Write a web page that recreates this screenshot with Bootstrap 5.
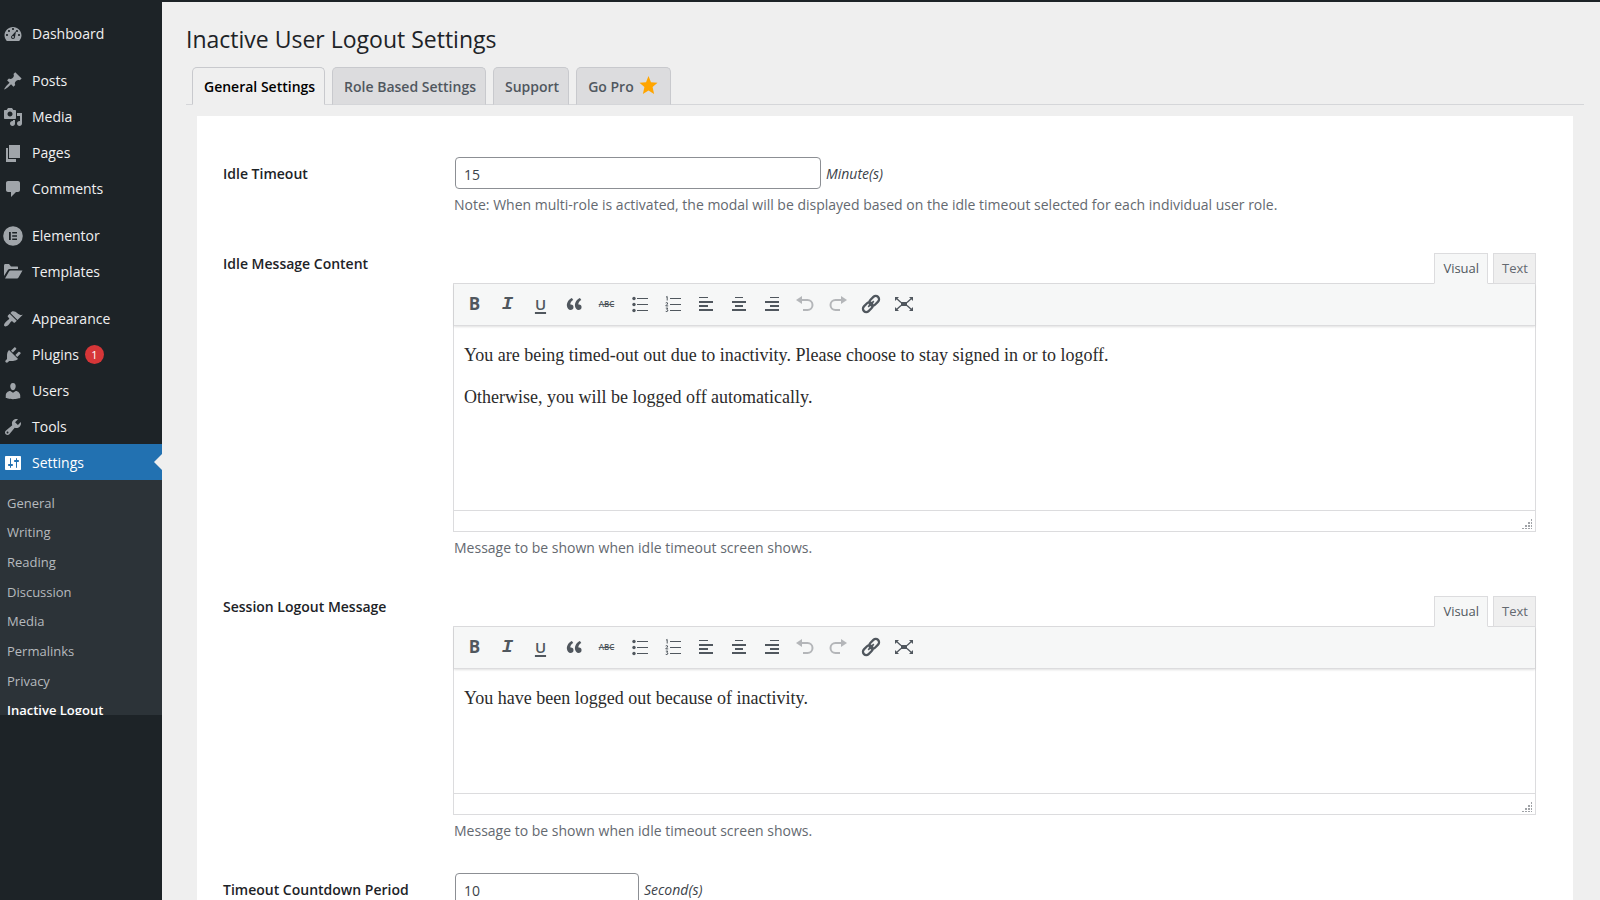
<!DOCTYPE html>
<html lang="en">
<head>
<meta charset="utf-8">
<meta name="viewport" content="width=device-width, initial-scale=1">
<title>Inactive User Logout Settings</title>
<link href="https://cdn.jsdelivr.net/npm/bootstrap@5.3.0/dist/css/bootstrap.min.css" rel="stylesheet">
<style>
  body { font-family: "Open Sans", "Noto Sans", sans-serif; font-size: 14px; line-height: 20px; color: #1d2327; background: #efefef; }
  a { text-decoration: none; }

  /* Admin menu */
  .admin-menu { width: 162px; background: #1d2327; padding-top: 13px; }
  .menu-link { display: flex; align-items: center; gap: 8px; height: 36px; padding: 1px 0 0 4px; color: #f0f0f1; position: relative; }
  .menu-link:hover { color: #72aee6; }
  .menu-link svg { width: 20px; height: 20px; flex: none; fill: #a0a5aa; margin-left: -1px; margin-right: 1px; }
  .menu-gap { margin-top: 11px; }
  .menu-link.current { background: #2271b1; color: #fff; }
  .menu-link.current svg { fill: #fff; }
  .menu-link.current::after { content: ""; position: absolute; right: 0; top: 10px; border: 8px solid transparent; border-left-width: 0; border-right-color: #efefef; }
  .count-pill { width: 19px; height: 19px; font-size: 11px; line-height: 19px; background: #d63638; color: #fff; margin-left: -2px; }
  .submenu-clip { height: 235px; overflow: hidden; background: #2c3338; }
  .submenu-list { display: grid; grid-auto-rows: 1fr; height: 245px; padding: 8px 0 0 7px; margin: 0; font-size: 13px; }
  .submenu-list a { display: flex; align-items: center; height: 100%; color: #b6babe; }
  .submenu-list a.current { color: #fff; font-weight: 600; }

  /* Page head and tabs */
  .page-title { font-size: 23px; line-height: 30px; font-weight: 400; margin: 0; padding-top: 22px; }
  .settings-tabs { gap: 7px; margin-top: 13px; padding-left: 6px; border-bottom: 1px solid #d5d6d9; }
  .settings-tabs .nav-link { display: flex; align-items: center; gap: 5px; height: 38px; padding: 2px 9px 0 11px; border: 1px solid #c8c9cd; border-radius: 5px 5px 0 0; border-bottom: 1px solid #d5d6d9; margin-bottom: -1px; background: #dcdcde; color: #50575e; font-weight: 600; }
  .settings-tabs .nav-link.active { background: #efefef; color: #000; border-color: #c8c9cd #c8c9cd #efefef; }
  .settings-tabs .nav-link.with-icon { padding-right: 12px; }

  /* Settings form */
  .settings-panel { background: #fff; margin: 11px 11px 0; padding: 41px 37px 32px 26px; }
  .form-grid { display: grid; grid-template-columns: 230px minmax(0, 1fr); row-gap: 32px; }
  .field-label { padding-top: 7px; font-weight: 600; align-self: start; }
  .admin-input { height: 32px; width: 366px; margin-left: 2px; padding: 2px 8px 0; border: 1px solid #8c8f94; border-radius: 4px; color: #3c434a; background: #fff; }
  .admin-input.narrow { width: 184px; }
  .unit { color: #3c434a; padding: 2px 0 0 1px; }
  .help-text { color: #646970; margin: 6px 0 0 1px; }

  /* Rich text editor */
  .editor-tabs { gap: 5px; padding-top: 6px; }
  .editor-tabs button { height: 31px; padding: 0 8px 2px; font-size: 13px; line-height: 18px; border: 1px solid #dcdcde; background: #efefef; color: #646970; margin-bottom: -1px; position: relative; z-index: 1; }
  .editor-tabs button:last-child { padding-right: 7px; }
  .editor-tabs button.active { background: #f6f7f7; border-bottom-color: #f6f7f7; color: #50575e; }
  .editor-box { border: 1px solid #dcdcde; }
  .editor-bar { height: 42px; padding: 0 0 2px 4px; background: #f6f7f7; border-bottom: 1px solid #dcdcde; box-shadow: 0 1px 2px rgba(0,0,0,.12); position: relative; }
  .editor-bar button { width: 33px; height: 28px; padding: 0; border: 0; background: none; color: #50575e; line-height: 20px; }
  .editor-bar svg { width: 20px; height: 20px; display: block; margin: auto; }
  .editor-bar button:disabled { color: #b4b6b9; }
  .editor-bar .glyph-b { font-size: 17px; font-weight: 700; }
  .editor-bar .glyph-i { font: italic 700 19px/20px "Liberation Mono", monospace; }
  .editor-bar .glyph-u { font-size: 15px; font-weight: 600; text-decoration: underline 2px; text-underline-offset: 2px; }
  .editor-bar .glyph-s { font-size: 8px; font-weight: 600; text-decoration: line-through; }
  .editor-text { display: block; width: 100%; height: 184px; padding: 19px 10px 0; border: 0; outline: 0; resize: none; color: #2b2b2b; font: 18px/21px "Liberation Serif", Georgia, serif; }
  .editor-text.short { height: 124px; }
  .editor-status { height: 21px; border-top: 1px solid #dcdcde; padding: 0 2px 1px 0; }
</style>
</head>
<body>
<svg class="d-none" aria-hidden="true">
  <symbol id="quote" viewBox="0 0 20 20"><path fill="currentColor" d="M9.490 13.220c0-.74-.2-1.380-.61-1.900-.62-.78-1.830-.88-2.530-.72-.29-1.650 1.110-3.750 2.920-4.650L7.880 4c-2.730 1.300-5.420 4.280-4.960 8.050C3.210 14.430 4.590 16 6.540 16c.85 0 1.560-.25 2.120-.75s.83-1.180.83-2.030zm8.050 0c0-.74-.2-1.380-.61-1.900-.63-.78-1.830-.88-2.530-.72-.29-1.650 1.110-3.750 2.920-4.650L15.930 4c-2.730 1.300-5.410 4.280-4.950 8.050.29 2.380 1.660 3.950 3.610 3.950.85 0 1.560-.25 2.120-.75s.83-1.180.83-2.030z"/></symbol>
  <symbol id="bullets" viewBox="0 0 20 20"><g fill="currentColor"><circle cx="4" cy="4.500" r="1.700"/><circle cx="4" cy="10.500" r="1.700"/><circle cx="4" cy="16.500" r="1.700"/><path d="M7 4h11v1H7zM7 10h11v1H7zM7 16h11v1H7z"/></g></symbol>
  <symbol id="numbers" viewBox="0 0 20 20"><path fill="currentColor" d="M7 4h11v1H7zM7 10h11v1H7zM7 16h11v1H7z"/><path fill="none" stroke="currentColor" stroke-width="1" d="M3 3.200l1.200-.7v4M2.700 9q1.400-.9 2 0q.2.900-2 2.900h2.500M2.800 14.100h2l-1 1.300q1.400.2 1 1.600q-.7 1-2.100.3"/></symbol>
  <symbol id="left" viewBox="0 0 20 20"><path fill="currentColor" d="M3 3h9v1H3zM3 7h14v2H3zM3 11h9v2H3zM3 15h14v2H3z"/></symbol>
  <symbol id="center" viewBox="0 0 20 20"><path fill="currentColor" d="M6 3h8v1H6zM3 7h14v2H3zM6 11h8v2H6zM3 15h14v2H3z"/></symbol>
  <symbol id="right" viewBox="0 0 20 20"><path fill="currentColor" d="M8 3h9v1H8zM3 7h14v2H3zM8 11h9v2H8zM3 15h14v2H3z"/></symbol>
  <symbol id="undo" viewBox="0 0 20 20"><path fill="currentColor" d="M1 6l6-4v8z"/><path fill="none" stroke="currentColor" stroke-width="2" d="M6 6h6.500a4.800 4.800 0 0 1 0 10H8"/></symbol>
  <symbol id="redo" viewBox="0 0 20 20"><path fill="currentColor" d="M19 6l-6-4v8z"/><path fill="none" stroke="currentColor" stroke-width="2" d="M14 6H7.500a4.800 4.800 0 0 0 0 10H12"/></symbol>
  <symbol id="link" viewBox="0 0 20 20"><g fill="none" stroke="currentColor" stroke-width="2.300" transform="rotate(-45 10 10)"><rect x="0" y="6.700" width="11" height="6.600" rx="3.300"/><rect x="9" y="6.700" width="11" height="6.600" rx="3.300"/><path d="M6 10h8" stroke-width="1.600"/></g></symbol>
  <symbol id="expand" viewBox="0 0 20 20"><path fill="currentColor" d="M7 8h6v4H7zM1 3h4L1 7zM19 3h-4l4 4zM1 17h4l-4-4zM19 17h-4l4-4z"/><path fill="none" stroke="currentColor" stroke-width="1.300" d="M2 4l5 4.500M18 4l-5 4.500M2 16l5-4.500M18 16l-5-4.500"/></symbol>
  <symbol id="grip" viewBox="0 0 12 12"><path fill="#a0a3a7" d="M10 1h1v2h-1zM10 4h1v2h-1zM7 4h2v2H7zM10 7h1v2h-1zM7 7h2v2H7zM4 7h2v2H4zM10 10h1v1h-1zM7 10h2v1H7zM4 10h2v1H4zM1 10h2v1H1z"/></symbol>
</svg>

<div class="d-flex flex-column vh-100 overflow-hidden">
  <header class="flex-shrink-0 border-top border-2" style="--bs-border-color:#1d2327"></header>
  <div class="d-flex flex-grow-1 overflow-hidden">
    <nav class="admin-menu flex-shrink-0" aria-label="Admin menu">
      <a class="menu-link" href="#"><svg viewBox="0 0 20 20"><path fill-rule="evenodd" d="M3.760 17h12.480c1.100-1.370 2.260-3.610 2.260-5.500 0-4.700-3.800-8.500-8.500-8.500s-8.500 3.800-8.500 8.500c0 1.890 1.160 4.130 2.260 5.500zM10 4c.55 0 1 .45 1 1s-.45 1-1 1-1-.45-1-1 .45-1 1-1zM6 6c.55 0 1 .45 1 1s-.45 1-1 1-1-.45-1-1 .45-1 1-1zm8 0c.55 0 1 .45 1 1s-.45 1-1 1-1-.45-1-1 .45-1 1-1zM4 10c.55 0 1 .45 1 1s-.45 1-1 1-1-.45-1-1 .45-1 1-1zm12 0c.55 0 1 .45 1 1s-.45 1-1 1-1-.45-1-1 .45-1 1-1zM8.500 12L13 7l-1 6c0 1.100-.9 2-2 2s-2-.9-2-2c0-.4.200-.7.500-1zM10 12a1 1 0 1 0 0 2a1 1 0 0 0 0-2z"/></svg>Dashboard</a>
      <a class="menu-link menu-gap" href="#"><svg viewBox="0 0 20 20"><path d="M10.440 3.020l1.820-1.820 6.360 6.350-1.830 1.820c-1.050-.68-2.480-.57-3.410.36l-.75.75c-.92.93-1.040 2.350-.35 3.410l-1.830 1.820-2.410-2.410-2.800 2.790c-.42.42-3.380 2.710-3.800 2.290s1.860-3.390 2.280-3.810l2.790-2.790L4.100 9.360l1.830-1.820c1.050.69 2.480.57 3.400-.36l.75-.75c.93-.92 1.050-2.350.36-3.410z"/></svg>Posts</a>
      <a class="menu-link" href="#"><svg viewBox="0 0 20 20"><path fill-rule="evenodd" d="M13 11V4c0-.55-.45-1-1-1h-1.670L9 1H5L3.670 3H2c-.55 0-1 .45-1 1v7c0 .55.45 1 1 1h10c.55 0 1-.45 1-1zM7 4.500c1.380 0 2.500 1.120 2.500 2.500S8.380 9.500 7 9.500 4.500 8.380 4.500 7 5.620 4.500 7 4.500zM14 6h5v10.500c0 1.380-1.120 2.500-2.500 2.500S14 17.880 14 16.500s1.120-2.500 2.500-2.500c.17 0 .34.02.5.050V9h-3V6zm-4 8.050V13h2v3.500c0 1.380-1.120 2.500-2.500 2.500S7 17.880 7 16.500 8.120 14 9.500 14c.17 0 .34.02.5.050z"/></svg>Media</a>
      <a class="menu-link" href="#"><svg viewBox="0 0 20 20"><path d="M6 15V2h11v13H6zm-1 1h8v3H3V5h2v11z"/></svg>Pages</a>
      <a class="menu-link" href="#"><svg viewBox="0 0 20 20"><path d="M5 2h10c1.100 0 2 .9 2 2v7c0 1.100-.9 2-2 2h-2l-5 5v-5H5c-1.100 0-2-.9-2-2V4c0-1.100.9-2 2-2z"/></svg>Comments</a>
      <a class="menu-link menu-gap" href="#"><svg viewBox="0 0 20 20"><path fill-rule="evenodd" d="M10 .2a9.800 9.800 0 1 0 0 19.600A9.800 9.800 0 0 0 10 .2zM6 6h1.800v8H6zM9.200 6H14v1.600H9.200zM9.200 9.200H14v1.600H9.200zM9.200 12.400H14V14H9.200z"/></svg>Elementor</a>
      <a class="menu-link" href="#"><svg viewBox="0 0 20 20"><path d="M1 14V3.500Q1 2 2 2H6l2 2.500h6.500q.5 0 .5.500v2H6.500Q5.500 7 5 7.700zM2 16.500l4-7q.5-.9 1.500-.9H19.500L15.500 15.500q-.5 1-1.500 1z"/></svg>Templates</a>
      <a class="menu-link menu-gap" href="#"><svg viewBox="0 0 20 20"><path d="M14.480 11.060L7.410 3.990l1.500-1.500c.5-.56 2.300-.47 3.510.32 1.210.8 1.430 1.280 2.910 2.100 1.180.64 2.450 1.260 4.450.85zm-.71.710L6.700 4.700 4.930 6.470c-.39.39-.39 1.020 0 1.410l1.060 1.060c.39.39.39 1.030 0 1.420-.6.600-1.430 1.110-2.210 1.690-.35.260-.7.530-1.010.84C1.430 14.230.4 16.080 1.400 17.070c.99 1 2.840-.03 4.180-1.360.31-.31.580-.66.850-1.020.57-.78 1.080-1.610 1.690-2.210.39-.39 1.020-.39 1.410 0l1.060 1.060c.39.39 1.020.39 1.410 0z"/></svg>Appearance</a>
      <a class="menu-link" href="#"><svg viewBox="0 0 20 20"><path d="M13.110 4.360L9.870 7.600 8 5.730l3.240-3.240c.35-.34 1.050-.2 1.560.32.52.51.66 1.210.31 1.550zm-8 1.770l.91-1.120 9.010 9.010-1.190.84c-.71.710-2.630 1.160-3.820 1.160H6.140L4.900 17.260c-.59.590-1.540.590-2.120 0-.59-.58-.59-1.530 0-2.120l1.240-1.240v-3.880c0-1.130.4-3.190 1.090-3.890zm7.260 3.970l3.240-3.240c.34-.35 1.040-.21 1.550.31.52.51.66 1.210.31 1.550l-3.240 3.250z"/></svg>Plugins <span class="count-pill rounded-circle text-center">1</span></a>
      <a class="menu-link" href="#"><svg viewBox="0 0 20 20"><path d="M10 9.250c-2.270 0-2.730-3.440-2.730-3.440C7 4.020 7.820 2 9.970 2c2.160 0 2.980 2.020 2.710 3.810 0 0-.41 3.440-2.680 3.440zm0 2.570L12.720 10c2.390 0 4.520 2.330 4.520 4.530v2.490s-3.650 1.130-7.240 1.130c-3.650 0-7.240-1.130-7.240-1.130v-2.490c0-2.250 1.940-4.480 4.470-4.480z"/></svg>Users</a>
      <a class="menu-link" href="#"><svg viewBox="0 0 20 20"><path fill-rule="evenodd" d="M16.680 9.770c-1.340 1.340-3.300 1.670-4.950.99l-5.410 6.520c-.99.990-2.590.990-3.580 0s-.99-2.590 0-3.570l6.520-5.420c-.68-1.650-.35-3.610.99-4.950 1.280-1.280 3.120-1.620 4.720-1.060l-2.890 2.890 2.820 2.820 2.860-2.870c.53 1.580.18 3.390-1.080 4.650zM3.810 16.210c.4.390 1.040.39 1.430 0 .4-.4.400-1.040 0-1.430-.39-.4-1.030-.4-1.430 0-.39.39-.39 1.030 0 1.430z"/></svg>Tools</a>
      <a class="menu-link current" href="#" aria-current="true"><svg viewBox="0 0 20 20"><path fill-rule="evenodd" d="M18 16V4c0-.55-.45-1-1-1H3c-.55 0-1 .45-1 1v12c0 .55.45 1 1 1h14c.55 0 1-.45 1-1zM8 11h1c.55 0 1 .45 1 1s-.45 1-1 1H8v1.500c0 .28-.22.5-.5.500s-.5-.22-.5-.5V13H6c-.55 0-1-.45-1-1s.45-1 1-1h1V5.500c0-.28.22-.5.500-.5s.5.220.5.500V11zm5-2h-1c-.55 0-1-.45-1-1s.45-1 1-1h1V5.500c0-.28.22-.5.500-.5s.5.220.5.500V7h1c.55 0 1 .45 1 1s-.45 1-1 1h-1v5.500c0 .28-.22.5-.5.500s-.5-.22-.5-.5V9z"/></svg>Settings</a>
      <div class="submenu-clip">
        <ul class="submenu-list list-unstyled">
          <li><a href="#">General</a></li>
          <li><a href="#">Writing</a></li>
          <li><a href="#">Reading</a></li>
          <li><a href="#">Discussion</a></li>
          <li><a href="#">Media</a></li>
          <li><a href="#">Permalinks</a></li>
          <li><a href="#">Privacy</a></li>
          <li><a class="current" href="#" aria-current="page">Inactive Logout</a></li>
        </ul>
      </div>
    </nav>

    <main class="flex-grow-1 overflow-hidden ps-4 pe-3">
      <h1 class="page-title">Inactive User Logout Settings</h1>
      <ul class="nav settings-tabs">
        <li class="nav-item"><a class="nav-link active" href="#" aria-current="page">General Settings</a></li>
        <li class="nav-item"><a class="nav-link" href="#">Role Based Settings</a></li>
        <li class="nav-item"><a class="nav-link" href="#">Support</a></li>
        <li class="nav-item"><a class="nav-link with-icon" href="#">Go Pro <svg width="19" height="20" viewBox="0 0 20 20" class="mb-1"><path fill="#ffa500" d="M10 .5l2.600 6.500 6.900.6-5.200 4.600 1.600 7.200L10 15.700l-5.900 3.700 1.600-7.200L.5 7.600l6.900-.6z"/></svg></a></li>
      </ul>

      <form class="settings-panel">
        <div class="form-grid">
          <label class="field-label" for="idle-timeout">Idle Timeout</label>
          <div>
            <div class="d-flex align-items-center gap-1">
              <input class="admin-input" id="idle-timeout" type="text" value="15">
              <em class="unit">Minute(s)</em>
            </div>
            <p class="help-text">Note: When multi-role is activated, the modal will be displayed based on the idle timeout selected for each individual user role.</p>
          </div>

          <label class="field-label" for="idle-message">Idle Message Content</label>
          <div>
            <div class="editor-tabs d-flex justify-content-end">
              <button type="button" class="active">Visual</button>
              <button type="button">Text</button>
            </div>
            <div class="editor-box">
              <div class="editor-bar d-flex align-items-center" role="toolbar" aria-label="Formatting">
                <button type="button" class="glyph-b">B</button>
                <button type="button" class="glyph-i">I</button>
                <button type="button" class="glyph-u">U</button>
                <button type="button" aria-label="Blockquote"><svg><use href="#quote"/></svg></button>
                <button type="button" class="glyph-s">ABC</button>
                <button type="button" aria-label="Bulleted list"><svg><use href="#bullets"/></svg></button>
                <button type="button" aria-label="Numbered list"><svg><use href="#numbers"/></svg></button>
                <button type="button" aria-label="Align left"><svg><use href="#left"/></svg></button>
                <button type="button" aria-label="Align center"><svg><use href="#center"/></svg></button>
                <button type="button" aria-label="Align right"><svg><use href="#right"/></svg></button>
                <button type="button" aria-label="Undo" disabled><svg><use href="#undo"/></svg></button>
                <button type="button" aria-label="Redo" disabled><svg><use href="#redo"/></svg></button>
                <button type="button" aria-label="Insert link"><svg><use href="#link"/></svg></button>
                <button type="button" aria-label="Fullscreen"><svg><use href="#expand"/></svg></button>
              </div>
              <textarea class="editor-text" id="idle-message">You are being timed-out out due to inactivity. Please choose to stay signed in or to logoff.

Otherwise, you will be logged off automatically.</textarea>
              <div class="editor-status d-flex justify-content-end align-items-end"><svg width="12" height="12"><use href="#grip"/></svg></div>
            </div>
            <p class="help-text">Message to be shown when idle timeout screen shows.</p>
          </div>

          <label class="field-label" for="logout-message">Session Logout Message</label>
          <div>
            <div class="editor-tabs d-flex justify-content-end">
              <button type="button" class="active">Visual</button>
              <button type="button">Text</button>
            </div>
            <div class="editor-box">
              <div class="editor-bar d-flex align-items-center" role="toolbar" aria-label="Formatting">
                <button type="button" class="glyph-b">B</button>
                <button type="button" class="glyph-i">I</button>
                <button type="button" class="glyph-u">U</button>
                <button type="button" aria-label="Blockquote"><svg><use href="#quote"/></svg></button>
                <button type="button" class="glyph-s">ABC</button>
                <button type="button" aria-label="Bulleted list"><svg><use href="#bullets"/></svg></button>
                <button type="button" aria-label="Numbered list"><svg><use href="#numbers"/></svg></button>
                <button type="button" aria-label="Align left"><svg><use href="#left"/></svg></button>
                <button type="button" aria-label="Align center"><svg><use href="#center"/></svg></button>
                <button type="button" aria-label="Align right"><svg><use href="#right"/></svg></button>
                <button type="button" aria-label="Undo" disabled><svg><use href="#undo"/></svg></button>
                <button type="button" aria-label="Redo" disabled><svg><use href="#redo"/></svg></button>
                <button type="button" aria-label="Insert link"><svg><use href="#link"/></svg></button>
                <button type="button" aria-label="Fullscreen"><svg><use href="#expand"/></svg></button>
              </div>
              <textarea class="editor-text short" id="logout-message">You have been logged out because of inactivity.</textarea>
              <div class="editor-status d-flex justify-content-end align-items-end"><svg width="12" height="12"><use href="#grip"/></svg></div>
            </div>
            <p class="help-text">Message to be shown when idle timeout screen shows.</p>
          </div>

          <label class="field-label" for="countdown">Timeout Countdown Period</label>
          <div class="d-flex align-items-center gap-1">
            <input class="admin-input narrow" id="countdown" type="text" value="10">
            <em class="unit">Second(s)</em>
          </div>
        </div>
      </form>
    </main>
  </div>
</div>
<script src="https://cdn.jsdelivr.net/npm/bootstrap@5.3.0/dist/js/bootstrap.bundle.min.js"></script>
</body>
</html>
